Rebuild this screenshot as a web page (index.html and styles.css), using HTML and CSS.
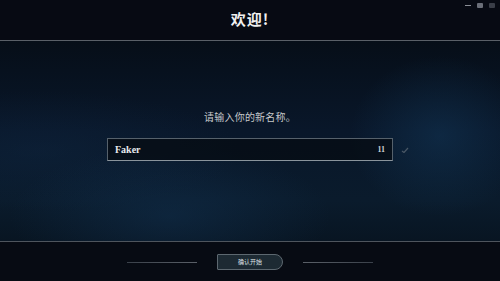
FILE: index.html
```html
<!DOCTYPE html>
<html lang="zh-CN">
<head>
<meta charset="utf-8">
<link rel="stylesheet" href="styles.css">
</head>
<body>
<div class="app">
  <header class="top">
    <h1 class="title">欢迎!</h1>
    <div class="winctl">
      <span class="min"></span>
      <span class="dot"></span>
      <span class="dot dim"></span>
    </div>
  </header>
  <main class="main">
    <p class="prompt">请输入你的新名称。</p>
    <div class="row">
      <div class="field">
        <span class="name">Faker</span>
        <span class="count">11</span>
      </div>
      <svg class="check" width="8" height="6" viewBox="0 0 8 6"><path d="M1 4 L3 5.5 L7 1" fill="none" stroke="#4a5866" stroke-width="1.2"/></svg>
    </div>
  </main>
  <footer class="bottom">
    <span class="rule"></span>
    <button class="btn">确认开始</button>
    <span class="rule"></span>
  </footer>
</div>
</body>
</html>
```

FILE: styles.css
```css
* { box-sizing: border-box; }
html, body { margin: 0; padding: 0; }
body {
  width: 500px; height: 281px; overflow: hidden;
  background: #060a12;
  font-family: "Noto Sans CJK SC", "Noto Sans", sans-serif;
}
.app { display: flex; flex-direction: column; height: 281px; }
.top {
  position: relative;
  height: 41px;
  background: #070a13;
  border-bottom: 1px solid #5a6068;
  display: flex; align-items: center; justify-content: center;
}
.title {
  margin: 0; font-size: 15px; font-weight: 700; color: #f0f0f0;
  letter-spacing: 1px; line-height: 1;
  margin-top: -4px;
}
.winctl {
  position: absolute; top: 3px; right: 5px;
  display: flex; align-items: center; gap: 6px;
}
.min { width: 6px; height: 1px; background: #8a8e96; }
.dot { width: 6px; height: 5px; border-radius: 1px; background: #6a6e78; }
.dot.dim { background: #3a3e48; }
.main {
  flex: 1;
  background:
    radial-gradient(ellipse 90px 80px at 440px 95px, rgba(20,60,95,0.45), transparent),
    radial-gradient(ellipse 160px 70px at 170px 175px, rgba(20,55,90,0.4), transparent),
    radial-gradient(ellipse 200px 60px at 40px 110px, rgba(18,45,75,0.3), transparent),
    linear-gradient(180deg, #060e18 0%, #09172a 45%, #0a1b2c 80%, #081522 100%);
  display: flex; flex-direction: column; align-items: center;
  padding-top: 69px;
}
.prompt {
  margin: 0; font-size: 10px; color: #c6c8cb; line-height: 14px;
  letter-spacing: 0.2px;
}
.row {
  margin-top: 14px;
  display: flex; align-items: center; gap: 8px;
  margin-left: 16px;
}
.field {
  width: 286px; height: 23px;
  border: 1px solid #56616b;
  border-bottom-color: #8a949c;
  background: rgba(6,12,20,0.8);
  display: flex; align-items: center; justify-content: space-between;
  padding: 0 7px 0 7px;
}
.name {
  font-family: "Liberation Serif", serif; font-weight: 700;
  font-size: 10px; color: #e8eaee;
}
.count {
  font-family: "Liberation Serif", serif; font-weight: 700;
  font-size: 8px; color: #cfd2d6;
}
.check { display: block; }
.bottom {
  height: 40px;
  border-top: 1px solid #4e555d;
  background: #070b13;
  display: flex; align-items: center; justify-content: center;
  gap: 20px;
  padding-top: 1px;
}
.rule {
  width: 70px; height: 1px;
  background: linear-gradient(90deg, #3a414a, #5a6068);
}
.rule:last-child { background: linear-gradient(90deg, #5a6068, #3a414a); }
.btn {
  width: 66px; height: 16px;
  border: 1px solid #5d6870;
  border-radius: 1px 8px 8px 1px;
  background: #1d2a33;
  color: #dfe3e6;
  font-family: "Noto Sans CJK SC", sans-serif;
  font-size: 6px; line-height: 1;
  padding: 0;
}
```
